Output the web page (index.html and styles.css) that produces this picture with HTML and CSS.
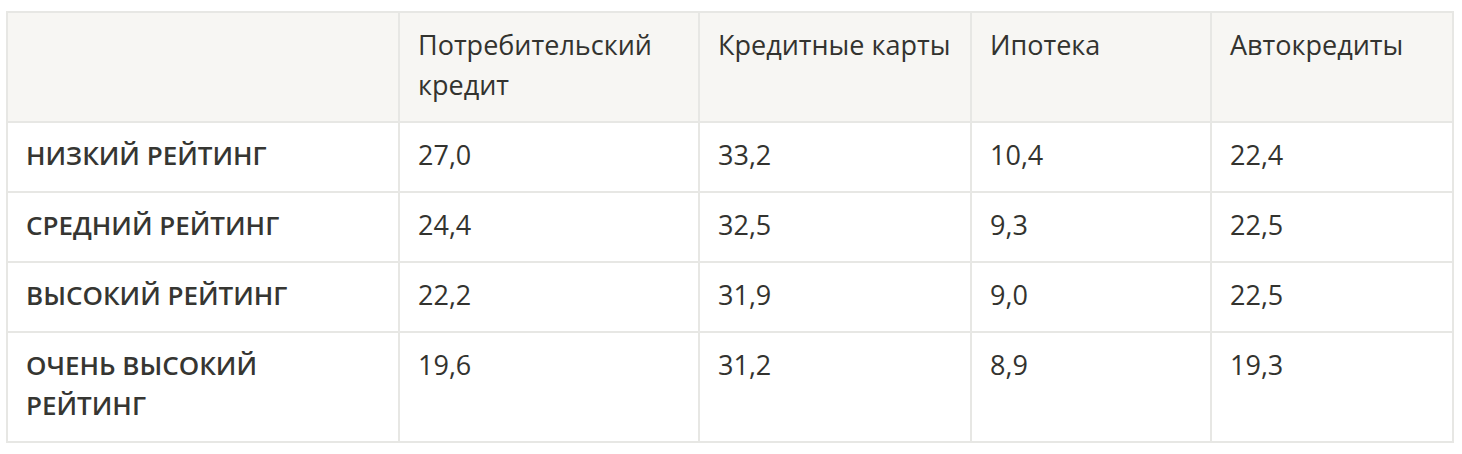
FILE: index.html
```html
<!DOCTYPE html>
<html lang="ru">
<head>
<meta charset="utf-8">
<link rel="stylesheet" href="styles.css">
</head>
<body>
<div class="wrap">
<table class="rates">
<colgroup>
<col class="c1"><col class="c2"><col class="c3"><col class="c4"><col class="c5">
</colgroup>
<thead>
<tr><th></th><th>Потребительский кредит</th><th>Кредитные карты</th><th>Ипотека</th><th>Автокредиты</th></tr>
</thead>
<tbody>
<tr><th>НИЗКИЙ РЕЙТИНГ</th><td>27,0</td><td>33,2</td><td>10,4</td><td>22,4</td></tr>
<tr><th>СРЕДНИЙ РЕЙТИНГ</th><td>24,4</td><td>32,5</td><td>9,3</td><td>22,5</td></tr>
<tr><th>ВЫСОКИЙ РЕЙТИНГ</th><td>22,2</td><td>31,9</td><td>9,0</td><td>22,5</td></tr>
<tr><th>ОЧЕНЬ ВЫСОКИЙ РЕЙТИНГ</th><td>19,6</td><td>31,2</td><td>8,9</td><td>19,3</td></tr>
</tbody>
</table>
</div>
</body>
</html>
```
FILE: styles.css
```css
html, body { margin: 0; padding: 0; background: #fff; }
.wrap { padding: 11px 6px; }
.rates {
  border-collapse: collapse;
  table-layout: fixed;
  width: 1446px;
  font-family: "Open Sans", "Noto Sans", sans-serif;
  font-size: 27px;
  line-height: 40px;
  color: #33332f;
}
.c1 { width: 392px; }
.c2 { width: 300px; }
.c3 { width: 272px; }
.c4 { width: 240px; }
.c5 { width: 242px; }
.rates th, .rates td {
  border: 2px solid #e7e7e4;
  padding: 12px 18px 16px;
  text-align: left;
  vertical-align: top;
}
.rates thead th {
  background: #f7f6f3;
  font-weight: 400;
}
.rates tbody th {
  font-size: 26px;
  font-weight: 600;
  color: #363632;
}
.rates td { font-weight: 400; }
```
